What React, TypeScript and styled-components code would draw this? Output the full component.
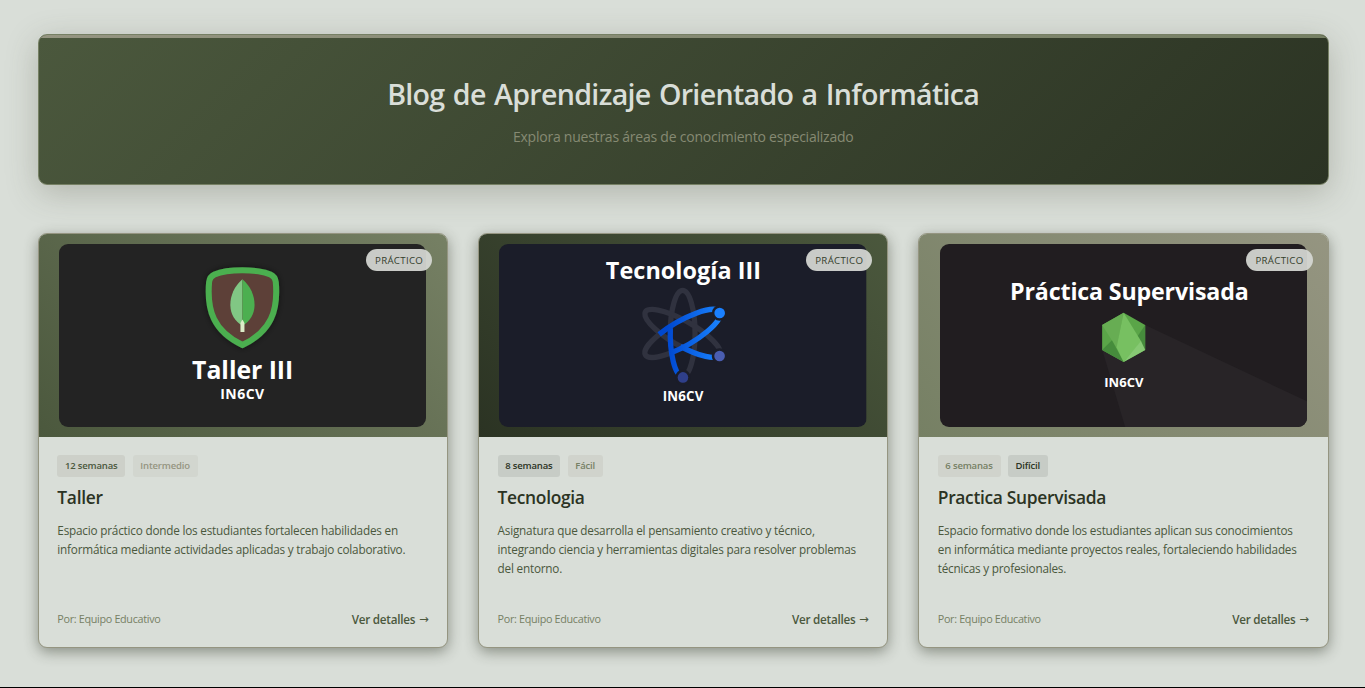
import React from "react";
import styled, { createGlobalStyle } from "styled-components";

const palette = {
  mist: "#d9ded8",
  forest: "#2b3323",
  moss: "#4b583d",
  sage: "#768064",
  taupe: "#959581",
};

const GlobalStyle = createGlobalStyle`
  *, *::before, *::after { box-sizing: border-box; }
  body {
    margin: 0;
    background: ${palette.mist};
    font-family: "Open Sans", "Noto Sans", sans-serif;
    color: ${palette.forest};
  }
`;

const Page = styled.div`
  display: flex;
  flex-direction: column;
  height: 688px;
  overflow: hidden;
`;

const Content = styled.main`
  flex: 1;
  padding: 34.2px 36.45px 0 37.85px;
`;

const PageEdge = styled.footer`
  height: 1px;
  background: #000;
`;

const Hero = styled.header`
  position: relative;
  height: 150.5px;
  padding-top: 38.8px;
  border: 1px solid ${palette.sage};
  border-radius: 9px;
  overflow: hidden;
  text-align: center;
  background: linear-gradient(135deg, ${palette.moss} 0%, ${palette.forest} 100%);
  box-shadow: 0 8px 32px rgba(74, 74, 58, 0.28);

  &::before {
    content: "";
    position: absolute;
    inset: 0 0 auto 0;
    height: 3px;
    background: linear-gradient(90deg, ${palette.taupe}, ${palette.sage});
  }
`;

const HeroTitle = styled.h1`
  margin: 0 0 13.2px;
  font-size: 28.6px;
  line-height: 40px;
  font-weight: 640;
  letter-spacing: -0.68px;
  word-spacing: 1.5px;
  color: ${palette.mist};
`;

const HeroSubtitle = styled.p`
  margin: 0;
  font-size: 14px;
  line-height: 20px;
  letter-spacing: -0.23px;
  color: #868a73;
`;

const CardGrid = styled.section`
  display: grid;
  grid-template-columns: repeat(3, 1fr);
  gap: 29.9px;
  margin-top: 48.5px;
`;

const Card = styled.article`
  display: flex;
  flex-direction: column;
  height: 414.4px;
  border: 1px solid ${palette.taupe};
  border-radius: 9px;
  overflow: hidden;
  background: ${palette.mist};
  box-shadow: 0 4px 14px rgba(43, 51, 35, 0.46);
`;

const Cover = styled.div<{ $from: string; $to: string }>`
  position: relative;
  display: flex;
  align-items: center;
  flex: none;
  height: 202.5px;
  padding-left: 20.3px;
  background: linear-gradient(45deg, ${(p) => p.$from}, ${(p) => p.$to});
`;

const Artwork = styled.svg`
  display: block;
  width: 367.3px;
  height: 183px;
  border-radius: 9px;
  font-family: "Open Sans", sans-serif;
  font-weight: 700;
`;

const Badge = styled.span`
  position: absolute;
  top: 14.6px;
  right: 14.95px;
  display: flex;
  align-items: center;
  justify-content: center;
  width: 66.25px;
  height: 22px;
  padding-top: 1px;
  border-radius: 11px;
  background: rgba(214, 216, 212, 0.93);
  color: #343e2b;
  font-size: 9.7px;
  font-weight: 500;
  letter-spacing: 0.3px;
`;

const Body = styled.div`
  flex: 1;
  display: flex;
  flex-direction: column;
  padding: 18px 18.4px 18.8px 18.5px;
`;

const TagRow = styled.div`
  display: flex;
  gap: 7.3px;
  margin-bottom: 9.2px;
`;

type Tone = "forest" | "moss" | "sage" | "taupe";

const tagFill: Record<Tone, string> = {
  forest: "#c7ccc6",
  moss: "#cdd0c9",
  sage: "#d0d3cc",
  taupe: "#d2d6cf",
};

const Tag = styled.span<{ $tone: Tone }>`
  height: 22px;
  padding: 0 7.9px 0 7.6px;
  border-radius: 3px;
  line-height: 21.6px;
  font-size: 9.5px;
  font-weight: 600;
  letter-spacing: -0.16px;
  white-space: nowrap;
  color: ${(p) => palette[p.$tone]};
  background: ${(p) => tagFill[p.$tone]};
`;

const CardTitle = styled.h2`
  margin: 0 0 13px;
  font-size: 17.4px;
  line-height: 22.4px;
  font-weight: 600;
  letter-spacing: -0.31px;
  color: ${palette.forest};
`;

const Description = styled.p`
  margin: 0;
  padding-right: 8px;
  font-size: 11.75px;
  line-height: 19px;
  letter-spacing: -0.208px;
  color: ${palette.moss};
`;

const CardFooter = styled.div`
  display: flex;
  align-items: center;
  justify-content: space-between;
  margin-top: auto;
  line-height: 18px;
`;

const Author = styled.span`
  font-size: 10.8px;
  letter-spacing: -0.32px;
  color: ${palette.sage};
`;

const DetailsLink = styled.a`
  display: flex;
  align-items: center;
  gap: 4px;
  font-size: 11.7px;
  font-weight: 600;
  letter-spacing: -0.26px;
  color: ${palette.moss};
`;

const Arrow = styled.span`
  font-family: "DejaVu Sans", sans-serif;
  font-size: 11.5px;
  font-weight: 400;
  letter-spacing: 0;
`;

function ShieldArt() {
  return (
    <Artwork viewBox="0 0 367 183" preserveAspectRatio="none">
      <defs>
        <filter id="shieldGlow" x="-20%" y="-20%" width="140%" height="140%">
          <feDropShadow dx="0" dy="0" stdDeviation="3" floodColor="#000" floodOpacity="0.5" />
        </filter>
      </defs>
      <rect width="367" height="183" fill="#232323" />
      <path
        d="M183.3 26.2C196 26.2 206 28.2 211.2 30.4Q216 32.6 216.6 38C219 66 212.5 87 183.3 101C154.1 87 147.6 66 150 38Q150.6 32.6 155.4 30.4C160.6 28.2 170.6 26.2 183.3 26.2Z"
        fill="#5d4037"
        stroke="#4caf50"
        strokeWidth="6"
        filter="url(#shieldGlow)"
      />
      <path d="M183.3 35.2C175 42.5 171.2 51.5 171.2 61C171.2 70 176 77.5 183.3 81.8Z" fill="#81c784" />
      <path d="M183.3 35.2C191.6 42.5 195.4 51.5 195.4 61C195.4 70 190.6 77.5 183.3 81.8Z" fill="#4caf50" />
      <path d="M183.3 75.5L185.3 79V88H181.3V79Z" fill="#dcedc8" />
      <text x="133" y="134.7" fontSize="24.8" textLength="101" fill="#fff">Taller III</text>
      <text x="161" y="154.8" fontSize="14" textLength="44" fill="#fff">IN6CV</text>
    </Artwork>
  );
}

const RX = 43;
const RY = 12.4;
const CENTER = { x: 183.5, y: 89.4 };

/* Arc of an orbit between two parametric angles, all in degrees. */
function orbitArc(tilt: number, start: number, end: number) {
  const rad = Math.PI / 180;
  const at = (t: number) => {
    const px = RX * Math.cos(t * rad);
    const py = RY * Math.sin(t * rad);
    const x = CENTER.x + px * Math.cos(tilt * rad) - py * Math.sin(tilt * rad);
    const y = CENTER.y + px * Math.sin(tilt * rad) + py * Math.cos(tilt * rad);
    return `${x.toFixed(2)} ${y.toFixed(2)}`;
  };
  const large = Math.abs(end - start) > 180 ? 1 : 0;
  const sweep = end > start ? 1 : 0;
  return `M${at(start)}A${RX} ${RY} ${tilt} ${large} ${sweep} ${at(end)}`;
}

const electrons = [
  { x: 220.5, y: 69, fill: "#1a80ff" },
  { x: 220.4, y: 112, fill: "#4a5db0" },
  { x: 183.8, y: 133.4, fill: "#2f3f8a" },
];

function AtomArt() {
  return (
    <Artwork viewBox="0 0 367 183" preserveAspectRatio="none">
      <defs>
        <linearGradient id="orbitBlue" gradientUnits="userSpaceOnUse" x1="162" y1="0" x2="222" y2="0">
          <stop offset="0.1" stopColor="#0048d0" />
          <stop offset="1" stopColor="#1a84ff" />
        </linearGradient>
      </defs>
      <rect width="367" height="183" fill="#1b1d29" />
      <g fill="none" stroke="#30323f" strokeWidth="5.3">
        <path d={orbitArc(-30, 117, 243)} />
        <path d={orbitArc(90, 90, 360)} />
        <path d={orbitArc(30, 80, 360)} />
      </g>
      <g fill="none" stroke="url(#orbitBlue)" strokeWidth="5.3">
        <path d={orbitArc(-30, -119, 119)} />
        <path d={orbitArc(90, 97, 2)} />
        <path d={orbitArc(30, 84, 2)} />
      </g>
      {electrons.map((e) => (
        <g key={e.fill}>
          <circle cx={e.x} cy={e.y} r="7.8" fill="#1b1d29" />
          <circle cx={e.x} cy={e.y} r="5.3" fill={e.fill} />
        </g>
      ))}
      <text x="106.8" y="35" fontSize="23.4" textLength="155" fill="#fff">Tecnología III</text>
      <text x="163.7" y="157" fontSize="13.3" textLength="40.5" fill="#fff">IN6CV</text>
    </Artwork>
  );
}

function HexagonArt() {
  return (
    <Artwork viewBox="0 0 367 183" preserveAspectRatio="none">
      <rect width="367" height="183" fill="#211d20" />
      <path d="M205 81L367 157.5V183H185L162.5 107Z" fill="#282427" />
      <path d="M183.5 68.8L205 81V106L183.5 118L162 106V81Z" fill="#5aa548" />
      <path d="M183.5 68.8L162 81L171.8 96.5L176.6 104Z" fill="#67ad53" />
      <path d="M171.8 96.3L162 106L183.5 118Z" fill="#468c3c" />
      <path d="M205 81L197.3 92.5L205 106Z" fill="#468c3c" />
      <path d="M183.5 68.8L201.1 97.5L183.5 118L176.4 103.5Z" fill="#77c061" />
      <path d="M200.8 97L205 106L183.5 118Z" fill="#87c974" />
      <text x="70" y="55.8" fontSize="23.2" textLength="238.5" fill="#fff">Práctica Supervisada</text>
      <text x="164" y="143.4" fontSize="13" textLength="39.3" fill="#fff">IN6CV</text>
    </Artwork>
  );
}

interface Course {
  title: string;
  description: string;
  weeks: string;
  weeksTone: Tone;
  level: string;
  levelTone: Tone;
  from: string;
  to: string;
  art: React.ReactNode;
}

const courses: Course[] = [
  {
    title: "Taller",
    description:
      "Espacio práctico donde los estudiantes fortalecen habilidades en informática mediante actividades aplicadas y trabajo colaborativo.",
    weeks: "12 semanas",
    weeksTone: "moss",
    level: "Intermedio",
    levelTone: "taupe",
    from: palette.moss,
    to: palette.sage,
    art: <ShieldArt />,
  },
  {
    title: "Tecnologia",
    description:
      "Asignatura que desarrolla el pensamiento creativo y técnico, integrando ciencia y herramientas digitales para resolver problemas del entorno.",
    weeks: "8 semanas",
    weeksTone: "forest",
    level: "Fácil",
    levelTone: "sage",
    from: palette.forest,
    to: palette.moss,
    art: <AtomArt />,
  },
  {
    title: "Practica Supervisada",
    description:
      "Espacio formativo donde los estudiantes aplican sus conocimientos en informática mediante proyectos reales, fortaleciendo habilidades técnicas y profesionales.",
    weeks: "6 semanas",
    weeksTone: "sage",
    level: "Difícil",
    levelTone: "forest",
    from: palette.sage,
    to: palette.taupe,
    art: <HexagonArt />,
  },
];

export default function App() {
  return (
    <Page>
      <GlobalStyle />
      <Content>
        <Hero>
          <HeroTitle>Blog de Aprendizaje Orientado a Informática</HeroTitle>
          <HeroSubtitle>Explora nuestras áreas de conocimiento especializado</HeroSubtitle>
        </Hero>
        <CardGrid>
          {courses.map((c) => (
            <Card key={c.title}>
              <Cover $from={c.from} $to={c.to}>
                {c.art}
                <Badge>PRÁCTICO</Badge>
              </Cover>
              <Body>
                <TagRow>
                  <Tag $tone={c.weeksTone}>{c.weeks}</Tag>
                  <Tag $tone={c.levelTone}>{c.level}</Tag>
                </TagRow>
                <CardTitle>{c.title}</CardTitle>
                <Description>{c.description}</Description>
                <CardFooter>
                  <Author>Por: Equipo Educativo</Author>
                  <DetailsLink>
                    Ver detalles <Arrow>→</Arrow>
                  </DetailsLink>
                </CardFooter>
              </Body>
            </Card>
          ))}
        </CardGrid>
      </Content>
      <PageEdge />
    </Page>
  );
}
